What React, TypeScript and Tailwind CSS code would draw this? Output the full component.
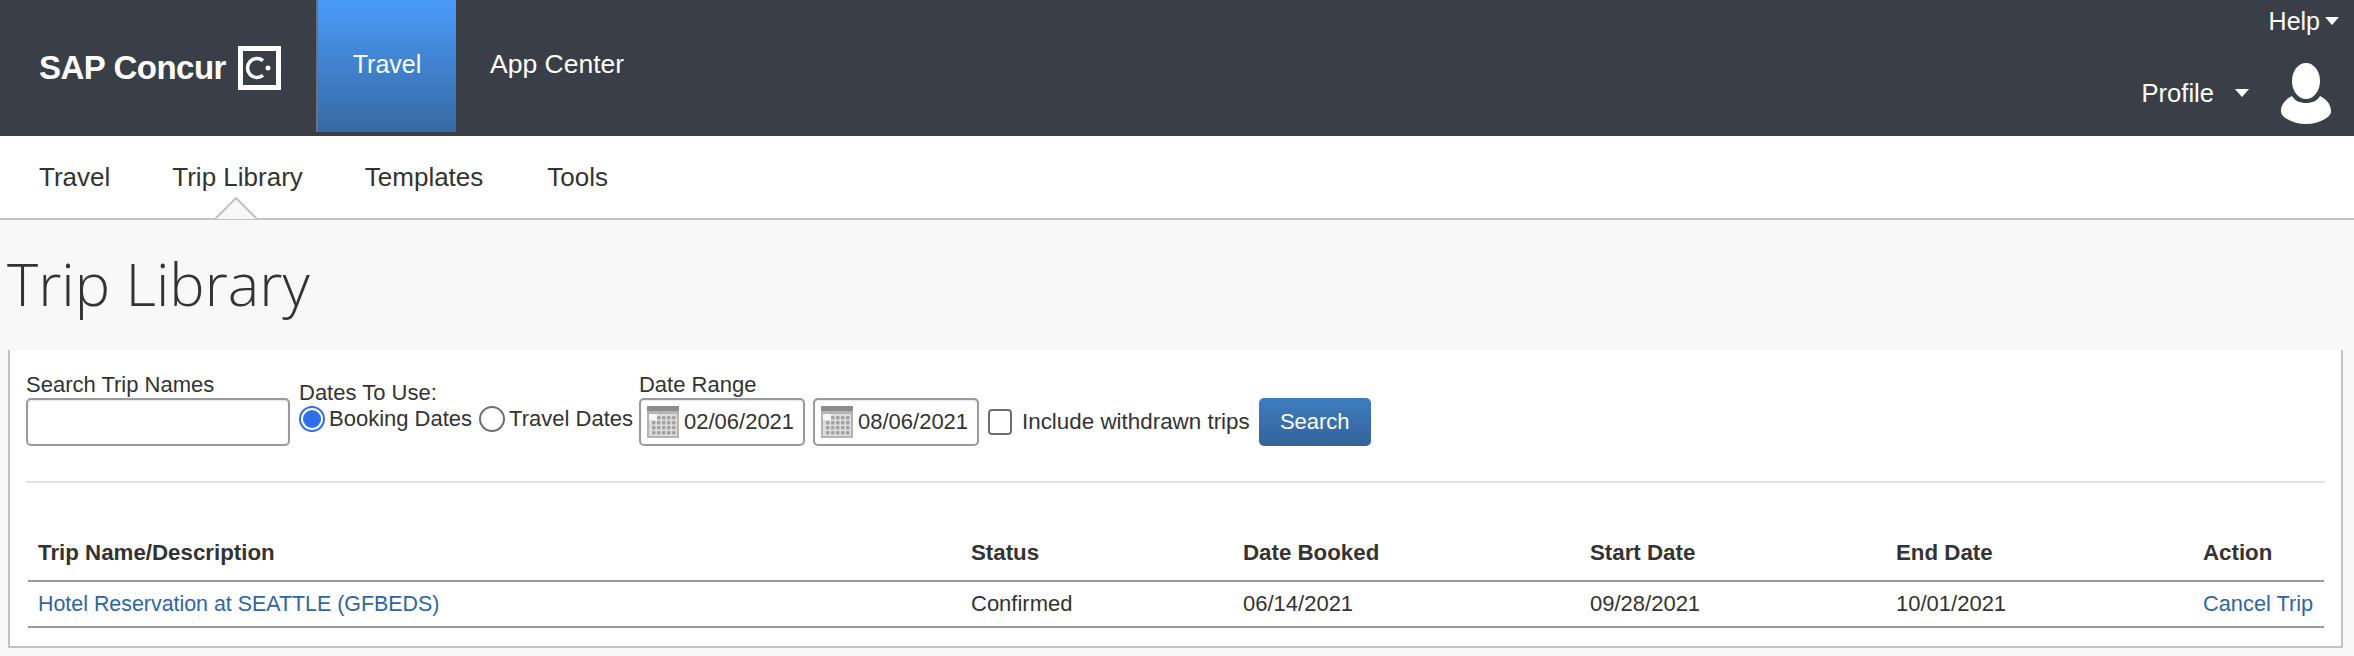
import React from 'react';

const CalendarIcon = () => (
  <svg width="32" height="32" viewBox="0 0 32 32" className="shrink-0">
    <rect x="0" y="0" width="32" height="32" fill="#b4b4b4" />
    <rect x="0" y="0" width="32" height="5" fill="#8c8c8c" />
    <rect x="2" y="8" width="28" height="22" fill="#dcdcdc" />
    <rect x="2" y="8" width="8" height="6" fill="#f6f6f6" />
    <g fill="#a2a2a2">
      {[11, 16, 21, 26].map((y) =>
        [5, 10, 15, 20, 25].map((x) => (x === 5 && y === 11 ? null : <rect key={`${x}-${y}`} x={x} y={y - 1} width="3.5" height="3.5" rx="1" />))
      )}
    </g>
  </svg>
);

const Caret = () => (
  <svg width="14" height="8" viewBox="0 0 14 8" className="shrink-0">
    <path d="M0 0h14L7 8z" fill="#ffffff" />
  </svg>
);

const DateBox = ({ value }: { value: string }) => (
  <div className="flex items-center gap-[5px] w-[166px] h-[48px] pl-[6px] rounded-[5px] border-2 border-[#9a9a9e] bg-white shadow-[inset_0_1px_2px_rgba(0,0,0,0.1)] text-[22px] text-[#333333]">
    <CalendarIcon />
    <span>{value}</span>
  </div>
);

const rows = [
  { name: 'Hotel Reservation at SEATTLE (GFBEDS)', status: 'Confirmed', booked: '06/14/2021', start: '09/28/2021', end: '10/01/2021' },
];

const App = () => {
  return (
    <div className="w-[2354px] h-[656px] overflow-hidden bg-[#f8f8f8] text-[#333333] font-['Liberation_Sans',Arial,sans-serif]">
      {/* top bar */}
      <div className="flex h-[136px] bg-[#3a3f47] text-white">
        <div className="flex items-center w-[316px] pl-[39px]">
          <span className="text-[33px] font-bold tracking-[-0.5px] leading-none mt-[-1px]">SAP Concur</span>
          <div className="flex items-center justify-center w-[43px] h-[44px] ml-[12px] border-[5px] border-white">
            <svg width="33" height="34" viewBox="0 0 33 34" className="shrink-0">
              <path d="M20 9.6a9.5 9.5 0 1 0 0 14.8" fill="none" stroke="#ffffff" strokeWidth="3.5" />
              <circle cx="25" cy="17" r="2.5" fill="#ffffff" />
            </svg>
          </div>
        </div>
        <div className="flex items-center justify-center w-[140px] h-[132px] pb-[3px] border-l-2 border-[#6b7280] bg-gradient-to-b from-[#4a9bfb] to-[#366aa3] text-[25px]">
          Travel
        </div>
        <div className="flex items-center h-[132px] pb-[2px] pl-[34px] text-[26.5px]">App Center</div>
        <div className="ml-auto flex flex-col items-end pr-[15px]">
          <div className="flex items-center gap-[5px] mt-[6px] text-[25px] leading-[30px]">
            Help
            <Caret />
          </div>
          <div className="flex items-center mt-[27px] pr-[8px]">
            <span className="text-[25.6px] mt-[-2px]">Profile</span>
            <div className="ml-[21px] mr-[32px] mt-[-2px]">
              <Caret />
            </div>
            <svg width="50" height="62" viewBox="0 0 50 62">
              <ellipse cx="25" cy="18" rx="14" ry="18" fill="#ffffff" />
              <path d="M11 33c3 5 8 7 14 7s11-2 14-7c6 3 11 8 11 15 0 4-3 6-6 8-5 3-12 5-19 5S11 59 6 56c-3-2-6-4-6-8 0-7 5-12 11-15z" fill="#ffffff" />
            </svg>
          </div>
        </div>
      </div>

      {/* sub nav */}
      <div className="relative flex items-center gap-[62px] h-[84px] pl-[39px] bg-white border-b-2 border-[#c2c2c2] text-[26px]">
        <span>Travel</span>
        <span>Trip Library</span>
        <span>Templates</span>
        <span className="ml-[2px]">Tools</span>
        <svg width="44" height="23" viewBox="0 0 44 23" className="absolute left-[214px] bottom-[-2px]">
          <path d="M1 22 22 1l21 21z" fill="#f8f8f8" />
          <path d="M1 22 22 1l21 21" fill="none" stroke="#c2c2c2" strokeWidth="2" />
        </svg>
      </div>

      {/* page title */}
      <h1 className="h-[130px] pl-[7px] pt-[25px] text-[59.4px] leading-[76px] font-light font-['Open_Sans',sans-serif] text-[#333333]">
        Trip Library
      </h1>

      {/* panel */}
      <div className="ml-[8px] mr-[11px] h-[298px] bg-white border-x-2 border-b-2 border-[#c2c2c2] px-[16px]">
        <div className="flex items-end h-[97px] pb-[1px] text-[22px] leading-[26px]">
          <label className="flex flex-col w-[265px]">
            <span className="h-[26px]">Search Trip Names</span>
            <span className="block w-[264px] h-[48px] rounded-[5px] border-2 border-[#9a9a9e] bg-white shadow-[inset_0_1px_2px_rgba(0,0,0,0.1)]" />
          </label>
          <div className="flex flex-col ml-[8px] pb-[14px]">
            <span>Dates To Use:</span>
            <div className="flex items-center">
              <span className="flex items-center justify-center w-[26px] h-[26px] rounded-full border-2 border-[#2f6fe8]">
                <span className="w-[18px] h-[18px] rounded-full bg-[#2f6fe8]" />
              </span>
              <span className="ml-[4px]">Booking Dates</span>
              <span className="w-[26px] h-[26px] ml-[7px] rounded-full border-2 border-[#6f6f6f]" />
              <span className="ml-[4px]">Travel Dates</span>
            </div>
          </div>
          <div className="flex flex-col ml-[6px]">
            <span className="h-[26px]">Date Range</span>
            <div className="flex gap-[8px]">
              <DateBox value="02/06/2021" />
              <DateBox value="08/06/2021" />
            </div>
          </div>
          <div className="flex items-center h-[48px] ml-[9px]">
            <span className="w-[24px] h-[26px] rounded-[4px] border-2 border-[#6f6f6f]" />
            <span className="ml-[10px] text-[22.4px]">Include withdrawn trips</span>
          </div>
          <button type="button" className="w-[112px] h-[48px] ml-[9px] rounded-[5px] bg-gradient-to-b from-[#3f7dc0] to-[#34639b] text-white text-[22px]">
            Search
          </button>
        </div>

        <div className="h-[36px] border-b-2 border-[#e4e4e4]" />

        <table className="w-[2296px] ml-[2px] mt-[36px] border-collapse table-fixed text-[22px]">
          <thead>
            <tr className="h-[62px] border-b-2 border-[#9a9a9e] font-bold text-left text-[22.3px]">
              <th className="w-[943px] pl-[10px] pt-[6px]">Trip Name/Description</th>
              <th className="w-[272px] pt-[6px]">Status</th>
              <th className="w-[347px] pt-[6px]">Date Booked</th>
              <th className="w-[306px] pt-[6px]">Start Date</th>
              <th className="w-[307px] pt-[6px]">End Date</th>
              <th className="pt-[6px]">Action</th>
            </tr>
          </thead>
          <tbody>
            {rows.map((row) => (
              <tr key={row.name} className="h-[46px] border-b-2 border-[#9a9a9e]">
                <td className="pl-[10px] pb-[1px]">
                  <a className="text-[#2e66a3] text-[21.4px]">{row.name}</a>
                </td>
                <td className="pb-[1px]">{row.status}</td>
                <td className="pb-[1px]">{row.booked}</td>
                <td className="pb-[1px]">{row.start}</td>
                <td className="pb-[1px]">{row.end}</td>
                <td className="pb-[1px]">
                  <a className="text-[#2e66a3] text-[21.8px]">Cancel Trip</a>
                </td>
              </tr>
            ))}
          </tbody>
        </table>
      </div>
    </div>
  );
};

export default App;
